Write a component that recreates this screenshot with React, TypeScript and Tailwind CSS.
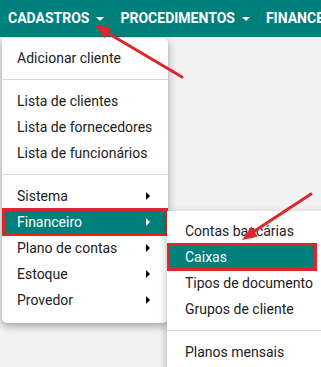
import React from 'react';

const Caret = () => (
  <span className="ml-[7px] inline-block w-0 h-0 border-l-[4px] border-r-[4px] border-t-[4px] border-l-transparent border-r-transparent border-t-white align-middle" />
);

const RightCaret = ({ white }: { white?: boolean }) => (
  <span
    className={
      'inline-block w-0 h-0 border-t-[4px] border-b-[4px] border-l-[4px] border-t-transparent border-b-transparent ' +
      (white ? 'border-l-white' : 'border-l-black')
    }
  />
);

const Divider = () => <div className="my-[8px] h-px bg-[#d9d9d9]" />;

const Item = ({ label, sub, active, inset }: { label: string; sub?: boolean; active?: boolean; inset?: boolean }) => (
  <div
    className={
      'flex items-center justify-between whitespace-nowrap border-[3px] pr-[15px] ' +
      (inset ? 'pl-[15px] ' : 'pl-[12px] ') +
      (active ? 'bg-[#00807a] text-white border-[#e0262b] h-[28px] -my-px' : 'text-[#212121] border-transparent h-[26px]')
    }
  >
    <span>{label}</span>
    {sub && <RightCaret white={active} />}
  </div>
);

export default function App() {
  return (
    <div className="relative w-[321px] h-[367px] overflow-hidden bg-[#f2f2f2] font-['Roboto',sans-serif]">
      <nav className="flex items-center h-[37px] bg-[#00807a] text-white font-bold text-[14px] whitespace-nowrap pl-[8px] gap-[16px]">
        <span className="flex items-center">CADASTROS<Caret /></span>
        <span className="flex items-center">PROCEDIMENTOS<Caret /></span>
        <span>FINANCEIRO</span>
      </nav>

      <div className="absolute left-[2px] top-[38px] w-[166px] bg-white rounded-b-[5px] rounded-tr-[5px] shadow-[0_3px_8px_rgba(0,0,0,0.35)] text-[14px] pt-[7px] pb-[10px]">
        <Item label="Adicionar cliente" />
        <Divider />
        <Item label="Lista de clientes" />
        <Item label="Lista de fornecedores" />
        <Item label="Lista de funcionários" />
        <Divider />
        <Item label="Sistema" sub />
        <Item label="Financeiro" sub active />
        <Item label="Plano de contas" sub />
        <Item label="Estoque" sub />
        <Item label="Provedor" sub />
      </div>

      <div className="absolute left-[167px] top-[211px] w-[170px] bg-white shadow-[0_3px_8px_rgba(0,0,0,0.3)] text-[14px] py-[7px]">
        <div className="w-[150px]">
          <Item label="Contas bancárias" inset />
          <Item label="Caixas" active inset />
          <Item label="Tipos de documento" inset />
          <Item label="Grupos de cliente" inset />
        </div>
        <Divider />
        <Item label="Planos mensais" inset />
      </div>

      <svg className="absolute inset-0 pointer-events-none" width="321" height="367" viewBox="0 0 321 367">
        <g stroke="#e0262b" strokeWidth="3" strokeLinecap="round" fill="#e0262b">
          <line x1="182" y1="77" x2="106" y2="32" />
          <polygon points="95,25 111,27.5 104.8,37.9" stroke="none" />
          <line x1="311" y1="194" x2="253" y2="232" />
          <polygon points="242,240 257.8,236.7 251.2,226.7" stroke="none" />
        </g>
      </svg>
    </div>
  );
}
